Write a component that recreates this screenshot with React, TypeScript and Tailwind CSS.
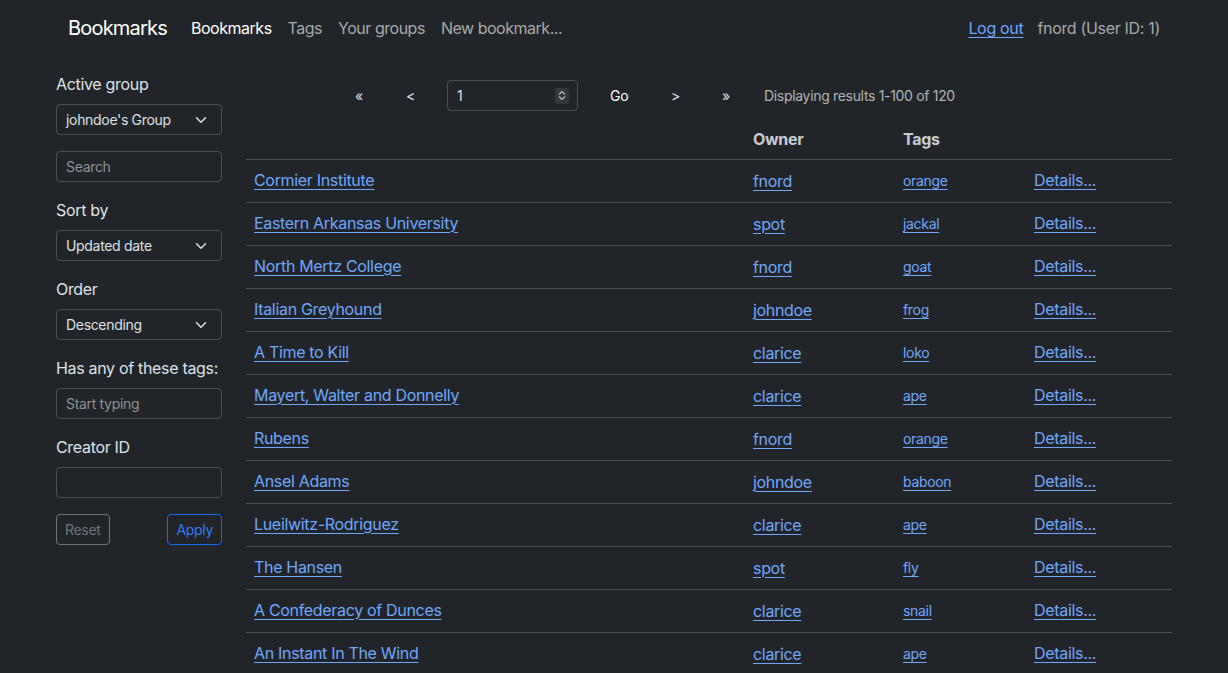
import React from 'react';

const ROWS = [
  { title: 'Cormier Institute', owner: 'fnord', tag: 'orange' },
  { title: 'Eastern Arkansas University', owner: 'spot', tag: 'jackal' },
  { title: 'North Mertz College', owner: 'fnord', tag: 'goat' },
  { title: 'Italian Greyhound', owner: 'johndoe', tag: 'frog' },
  { title: 'A Time to Kill', owner: 'clarice', tag: 'loko' },
  { title: 'Mayert, Walter and Donnelly', owner: 'clarice', tag: 'ape' },
  { title: 'Rubens', owner: 'fnord', tag: 'orange' },
  { title: 'Ansel Adams', owner: 'johndoe', tag: 'baboon' },
  { title: 'Lueilwitz-Rodriguez', owner: 'clarice', tag: 'ape' },
  { title: 'The Hansen', owner: 'spot', tag: 'fly' },
  { title: 'A Confederacy of Dunces', owner: 'clarice', tag: 'snail' },
  { title: 'An Instant In The Wind', owner: 'clarice', tag: 'ape' },
];

const Chevron = () => (
  <svg width="12" height="12" viewBox="0 0 16 16" fill="none" stroke="#dee2e6" strokeWidth="2" strokeLinecap="round" strokeLinejoin="round">
    <path d="m2 5 6 6 6-6" />
  </svg>
);

const Select = ({ value }: { value: string }) => (
  <div className="flex items-center justify-between h-[31px] px-[9px] pr-[14px] border border-[#495057] rounded-[4px] text-[14px] text-[#dee2e6]">
    <span>{value}</span>
    <Chevron />
  </div>
);

const Input = ({ placeholder }: { placeholder?: string }) => (
  <div className="flex items-center h-[31px] px-[9px] border border-[#495057] rounded-[4px] text-[14px] text-[#8d9196]">
    {placeholder}
  </div>
);

const Label = ({ children }: { children: React.ReactNode }) => (
  <div className="text-[16px] leading-6 text-[#dee2e6] mb-2 whitespace-nowrap">{children}</div>
);

const link = 'text-[#6ea8fe] underline underline-offset-[3px] decoration-1';

export default function App() {
  return (
    <div className="min-h-screen bg-[#212529] text-[#dee2e6] font-['Inter',sans-serif] tracking-[-0.02em]">
      <nav className="h-[56px] px-[56px]">
        <div className="flex items-center h-full px-3">
          <span className="text-[20px] text-white mr-[24px] tracking-[-0.04em]">Bookmarks</span>
          <div className="flex gap-[16px] text-[16px] text-[#a7a9ab] tracking-[-0.03em]">
            <span className="text-white">Bookmarks</span>
            <span>Tags</span>
            <span>Your groups</span>
            <span>New bookmark...</span>
          </div>
          <div className="ml-auto flex items-center gap-[14px] text-[16px]">
            <span className="text-[#6ea8fe] underline underline-offset-[3px]">Log out</span>
            <span className="text-[#a7a9ab]">fnord (User ID: 1)</span>
          </div>
        </div>
      </nav>

      <div className="flex px-[56px] gap-6 pt-[16px]">
        <aside className="w-[166px] shrink-0">
          <Label>Active group</Label>
          <Select value="johndoe's Group" />
          <div className="mt-[16px] mb-4">
            <Input placeholder="Search" />
          </div>
          <Label>Sort by</Label>
          <Select value="Updated date" />
          <div className="mt-4" />
          <Label>Order</Label>
          <Select value="Descending" />
          <div className="mt-4" />
          <Label>Has any of these tags:</Label>
          <Input placeholder="Start typing" />
          <div className="mt-4" />
          <Label>Creator ID</Label>
          <Input />
          <div className="flex justify-between mt-4">
            <button className="h-[31px] px-[8px] border border-[#6c757d] rounded-[4px] text-[14px] text-[#6c757d]">Reset</button>
            <button className="h-[31px] px-[8px] border border-[#0d6efd] rounded-[4px] text-[14px] text-[#2f7dfd]">Apply</button>
          </div>
        </aside>

        <main className="flex-1">
          <div className="flex items-center h-[31px] mt-[8px] pl-[109px] text-[14px]">
            <span className="w-[51px]">«</span>
            <span className="w-[41px]">&lt;</span>
            <div className="flex items-center justify-between w-[131px] h-[31px] pl-[9px] pr-[8px] border border-[#495057] rounded-[4px] text-[14px]">
              <span>1</span>
              <div className="flex flex-col items-center justify-center w-[14px] h-[16px] bg-[#34383c] rounded-[2px]">
                <svg width="8" height="5" viewBox="0 0 8 5" fill="none" stroke="#b8bcc0" strokeWidth="1.2"><path d="M1 4.5 4 1.5 7 4.5" /></svg>
                <svg width="8" height="5" viewBox="0 0 8 5" fill="none" stroke="#b8bcc0" strokeWidth="1.2" className="mt-[1px]"><path d="M1 0.5 4 3.5 7 0.5" /></svg>
              </div>
            </div>
            <span className="ml-[32px] w-[65px] text-[14px] text-white">Go</span>
            <span className="w-[51px] -ml-[4px]">&gt;</span>
            <span className="w-[42px]">»</span>
            <span className="text-[#b0b4b8]">Displaying results 1-100 of 120</span>
          </div>

          <table className="w-full mt-[8px] border-collapse text-[16px]">
            <thead>
              <tr className="h-[40px] border-b border-[#495057]">
                <th className="w-[499px]" />
                <th className="w-[150px] px-2 text-left font-bold text-[#c8ccd0]">Owner</th>
                <th className="w-[131px] px-2 text-left font-bold text-[#c8ccd0]">Tags</th>
                <th />
              </tr>
            </thead>
            <tbody>
              {ROWS.map((r) => (
                <tr key={r.title} className="h-[43px] border-b border-[#495057]">
                  <td className="px-2 pb-[2px]"><span className={link}>{r.title}</span></td>
                  <td className="px-2"><span className={link}>{r.owner}</span></td>
                  <td className="px-2 text-[14px]"><span className={link}>{r.tag}</span></td>
                  <td className="px-2 pb-[2px]"><span className={link}>Details...</span></td>
                </tr>
              ))}
            </tbody>
          </table>
        </main>
      </div>
    </div>
  );
}
